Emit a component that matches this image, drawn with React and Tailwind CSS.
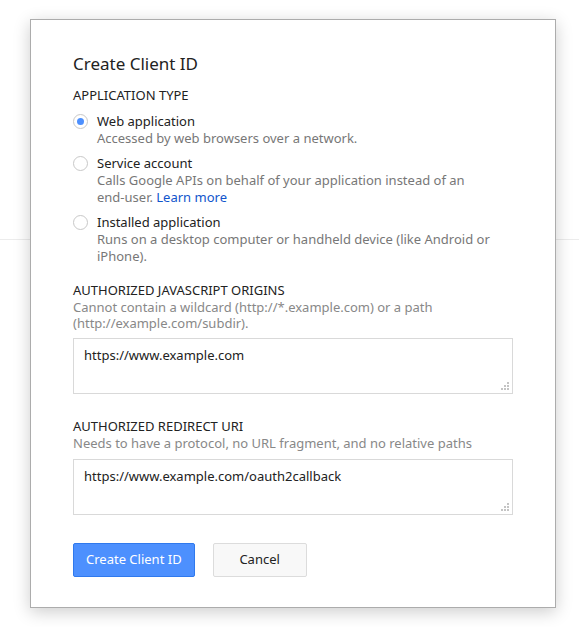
import React, { useState } from "react";

const font = { fontFamily: '"Noto Sans", "Open Sans", sans-serif' };

function Radio({ checked }) {
  return (
    <span className="mt-[1px] flex h-[15px] w-[15px] shrink-0 items-center justify-center rounded-full border border-[#c8c8c8] bg-white">
      {checked && <span className="h-[7px] w-[7px] rounded-full bg-[#4d90fe]" />}
    </span>
  );
}

function Option({ checked, label, children, onClick }) {
  return (
    <div className="flex cursor-pointer gap-[9px]" onClick={onClick}>
      <Radio checked={checked} />
      <div>
        <div className="text-[13px] leading-[17px] text-[#222]">{label}</div>
        <div className="text-[13px] leading-[17px] text-[#777]">{children}</div>
      </div>
    </div>
  );
}

function Field({ value }) {
  return (
    <div className="relative">
      <textarea
        className="block h-[56px] w-full resize-none border border-[#d9d9d9] px-[10px] py-[8px] text-[13px] leading-[17px] text-[#222] outline-none"
        style={font}
        defaultValue={value}
      />
      {/* grip */}
      <svg className="absolute bottom-[3px] right-[3px]" width="9" height="9" viewBox="0 0 9 9" fill="#c4c4c4">
        <rect x="6" y="0" width="2" height="2" />
        <rect x="3" y="3" width="2" height="2" />
        <rect x="6" y="3" width="2" height="2" />
        <rect x="0" y="6" width="2" height="2" />
        <rect x="3" y="6" width="2" height="2" />
        <rect x="6" y="6" width="2" height="2" />
      </svg>
    </div>
  );
}

export default function App() {
  const [type, setType] = useState("web");

  return (
    <div className="relative h-[627px] w-[579px] overflow-hidden bg-white" style={font}>
      {/* page behind the dialog */}
      <div className="absolute left-0 right-0 top-[239px] border-t border-[#ececec]" />

      <div className="absolute left-[30px] top-[19px] w-[526px] border border-[#acacac] bg-white px-[42px] pb-[30px] pt-[33px] shadow-[0_4px_16px_rgba(0,0,0,0.2)]">
        <h2 className="text-[17px] leading-[22px] text-[#222]">Create Client ID</h2>

        <div className="mt-[12px] text-[13px] leading-[17px] text-[#222]">APPLICATION TYPE</div>

        <div className="mt-[9px] flex flex-col gap-[8px]">
          <Option checked={type === "web"} label="Web application" onClick={() => setType("web")}>
            Accessed by web browsers over a network.
          </Option>
          <Option checked={type === "service"} label="Service account" onClick={() => setType("service")}>
            Calls Google APIs on behalf of your application instead of an{" "}
            <span className="whitespace-nowrap">end-user.</span>{" "}
            <a className="text-[#15c]" href="#">Learn more</a>
          </Option>
          <Option checked={type === "installed"} label="Installed application" onClick={() => setType("installed")}>
            Runs on a desktop computer or handheld device (like Android or iPhone).
          </Option>
        </div>

        <div className="mt-[17px] text-[13px] leading-[17px] text-[#222]">AUTHORIZED JAVASCRIPT ORIGINS</div>
        <div className="text-[13px] leading-[16px] text-[#888]">
          Cannot contain a wildcard (http://*.example.com) or a path (http://example.com/subdir).
        </div>
        <div className="mt-[7px]">
          <Field value="https://www.example.com" />
        </div>

        <div className="mt-[24px] text-[13px] leading-[17px] text-[#222]">AUTHORIZED REDIRECT URI</div>
        <div className="text-[13px] leading-[16px] text-[#888]">
          Needs to have a protocol, no URL fragment, and no relative paths
        </div>
        <div className="mt-[8px]">
          <Field value="https://www.example.com/oauth2callback" />
        </div>

        <div className="mt-[28px] flex gap-[18px]">
          <button className="h-[34px] rounded-[2px] border border-[#3079ed] bg-[#4d90fe] px-[12px] text-[13px] text-white">
            Create Client ID
          </button>
          <button className="h-[34px] w-[94px] rounded-[2px] border border-[#dcdcdc] bg-[#f8f8f8] text-[13px] text-[#222]">
            Cancel
          </button>
        </div>
      </div>
    </div>
  );
}
